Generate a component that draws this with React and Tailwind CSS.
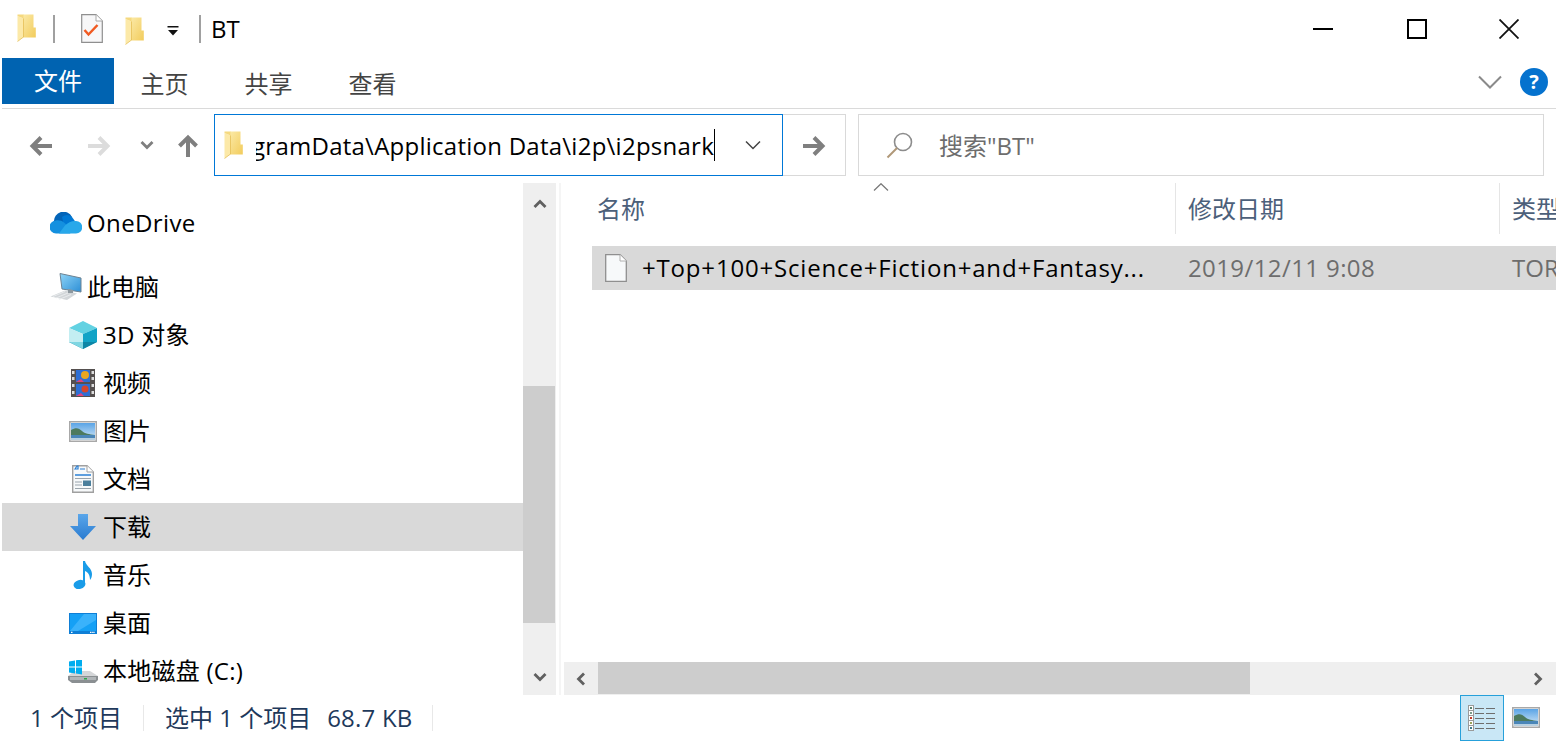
import React from "react";

const FONT = "[font-family:'Open_Sans','Noto_Sans_CJK_SC',sans-serif]";

function Folder({ id, className }) {
  return (
    <svg className={className} width="20" height="28" viewBox="0 0 20 28">
      <defs>
        <linearGradient id={id} x1="0" y1="0" x2="1" y2="1">
          <stop offset="0" stopColor="#fbe9a6" />
          <stop offset="1" stopColor="#f2cc5c" />
        </linearGradient>
      </defs>
      <path d="M6 0.500H16.500V13.500H18.800V23.500H6z" fill={`url(#${id})`} />
      <path d="M0.500 2L6.500 4.500V23L0.500 27.500z" fill="#fce9a8" />
      <path d="M0.500 0.500H6.500V4.500L0.500 2z" fill="#f5d97f" />
      <path d="M6.500 4.500V23L0.500 27.500" fill="none" stroke="#e2b94c" strokeWidth="0.700" />
    </svg>
  );
}

function Chevron({ dir, className }) {
  const r = { up: 0, right: 90, down: 180, left: 270 }[dir];
  return (
    <svg className={className} width="14" height="10" viewBox="0 0 14 10" style={{ transform: `rotate(${r}deg)` }}>
      <path d="M1.500 8L7 2.500L12.500 8" fill="none" stroke="#606060" strokeWidth="2.800" />
    </svg>
  );
}

function Arrow({ color, rotate = 0 }) {
  return (
    <svg width="24" height="22" viewBox="0 0 24 22" style={{ transform: `rotate(${rotate}deg)` }}>
      <path d="M23 11H4M12 2.500L3.500 11L12 19.500" fill="none" stroke={color} strokeWidth="4" />
    </svg>
  );
}

const OneDriveIcon = () => (
  <svg width="32" height="22" viewBox="0 0 32 22">
    <path d="M4 10a9.500 9.500 0 0 1 18-5l-7 13H6z" fill="#0364b8" />
    <path d="M12 5a8 8 0 0 1 10 0l5 7-12 6z" fill="#0078d4" />
    <path d="M6 8.500c3-.5 6 .5 8 2l9 8-3 3H6a6.500 6.500 0 0 1 0-13z" fill="#1490df" />
    <path d="M26 9a6 6 0 0 1 0 12.500H9l6-8c3-3 7-5 11-4.500z" fill="#28a8ea" />
  </svg>
);
const PcIcon = () => (
  <svg width="32" height="28" viewBox="0 0 32 28">
    <defs>
      <linearGradient id="pcs" x1="0" y1="0" x2="1" y2="1">
        <stop offset="0" stopColor="#8fd4f7" />
        <stop offset="1" stopColor="#2d8fd6" />
      </linearGradient>
    </defs>
    <path d="M10 0.500L31 5v14l-19-3z" fill="url(#pcs)" stroke="#6d8292" strokeWidth="1" />
    <path d="M0.500 23.500L15 17.500l12 3-10 6.500z" fill="#d2d6d9" />
    <path d="M3 23.500l12-5M6 25l12-5M9 26.500l12-5" stroke="#eef0f1" strokeWidth="0.800" />
    <path d="M18 16l5 1v3h-5z" fill="#8d989f" />
  </svg>
);
const CubeIcon = () => (
  <svg width="28" height="28" viewBox="0 0 28 28">
    <path d="M14 0L28 7 14 13 0 7z" fill="#63d2e2" />
    <path d="M0 7l14 6v15L0 21z" fill="#c3eef2" />
    <path d="M28 7L14 13v15l14-7z" fill="#11a3c6" />
    <path d="M14 21l14 0-14 7-14-7z" fill="#0c7e9e" opacity="0.8" />
    <path d="M0 21l14 7v-7z" fill="#7fd6e2" />
  </svg>
);
const VideoIcon = () => (
  <svg width="24" height="28" viewBox="0 0 24 28">
    <rect width="24" height="28" fill="#55504f" />
    <rect x="5" y="1" width="14" height="12" fill="#2e6fd4" />
    <rect x="5" y="15" width="14" height="12" fill="#2e6fd4" />
    <circle cx="14" cy="6" r="4" fill="#e9a620" />
    <circle cx="14" cy="20" r="3.500" fill="#d6452c" />
    <path d="M5 13l5-3 3 3zM5 27l5-3 3 3z" fill="#e2437c" />
    <g fill="#dddddd">
      <rect x="1" y="2" width="2.500" height="3" /><rect x="1" y="8" width="2.500" height="3" /><rect x="1" y="15" width="2.500" height="3" /><rect x="1" y="22" width="2.500" height="3" />
      <rect x="20.500" y="2" width="2.500" height="3" /><rect x="20.500" y="8" width="2.500" height="3" /><rect x="20.500" y="15" width="2.500" height="3" /><rect x="20.500" y="22" width="2.500" height="3" />
    </g>
  </svg>
);
function PicIcon({ id, w = 28, h = 21 }) {
  return (
    <svg width={w} height={h} viewBox="0 0 28 21">
      <defs>
        <linearGradient id={id} x1="0" y1="0" x2="0" y2="1">
          <stop offset="0" stopColor="#5aa4e6" />
          <stop offset="1" stopColor="#d6e9f7" />
        </linearGradient>
      </defs>
      <rect x="0.750" y="0.750" width="26.500" height="19.500" fill="#fff" stroke="#a8a8a8" strokeWidth="1.500" />
      <rect x="2" y="2" width="24" height="17" fill={`url(#${id})`} />
      <path d="M2 9c5-3 8-2 11 1s7 3 13 4v1H2z" fill="#4d7a5e" />
      <path d="M2 14h24v5H2z" fill="#4a86b8" />
      <path d="M2 17h24v2H2z" fill="#b8d0e0" />
    </svg>
  );
}
const DocIcon = () => (
  <svg width="22" height="28" viewBox="0 0 22 28">
    <path d="M0.700 0.700H15L21.300 7V27.300H0.700z" fill="#f7f9fa" stroke="#a0a0a0" strokeWidth="1.400" />
    <path d="M15 0.700V7H21.300" fill="#fff" stroke="#a0a0a0" strokeWidth="1" />
    <path d="M3 4l2-3h1v3zM8 4h5" stroke="#2a7fd4" strokeWidth="1.200" fill="none" />
    <path d="M3 10h16" stroke="#2a7fd4" strokeWidth="1.500" />
    <path d="M3 13.500h16M3 17h7M3 20h7M3 23.500h16" stroke="#9aa4ac" strokeWidth="1.200" />
    <rect x="11" y="15.500" width="8" height="5.500" fill="#4b7f9c" />
  </svg>
);
const DownIcon = () => (
  <svg width="26" height="26" viewBox="0 0 26 26">
    <defs>
      <linearGradient id="dl" x1="0" y1="0" x2="0" y2="1">
        <stop offset="0" stopColor="#5aa6ea" />
        <stop offset="1" stopColor="#2a7bd0" />
      </linearGradient>
    </defs>
    <path d="M8 0h10v12h8L13 26 0 12h8z" fill="url(#dl)" />
  </svg>
);
const MusicIcon = () => (
  <svg width="20" height="28" viewBox="0 0 20 28">
    <ellipse cx="6.500" cy="23.500" rx="6" ry="4.500" fill="#1a9ce8" transform="rotate(-15 6.500 23.500)" />
    <path d="M10 23V0h2c1 5 7 7 7 13 0 3-1 5-2 6 0-5-2-8-5-9v13z" fill="#1a9ce8" />
  </svg>
);
const DesktopIcon = () => (
  <svg width="28" height="21" viewBox="0 0 28 21">
    <rect width="28" height="21" fill="#0f7fd6" />
    <rect x="1" y="1" width="26" height="17" fill="#15a0f5" />
    <path d="M1 18L15 1h12v6L9 18z" fill="#3ab2fb" />
    <path d="M2 19.300h1.500M21 19.300h5" stroke="#fff" strokeWidth="1.200" strokeDasharray="1.500 .7" />
  </svg>
);
const DriveIcon = () => (
  <svg width="30" height="23" viewBox="0 0 30 23">
    <path d="M6 11h16l8 5v3H0v-3z" fill="#d4d6d8" />
    <path d="M0 16h30v4l-3 3H4l-4-3z" fill="#8a8f92" />
    <path d="M2 17h26v3H2z" fill="#b0b5b8" />
    <rect x="16" y="18" width="3" height="1.500" fill="#2ca84a" />
    <g fill="#00adef">
      <path d="M1 1.500l6-1v6H1z" /><path d="M8 0.300l6-1V6.500H8z" /><path d="M1 7.500h6v6l-6-1z" /><path d="M8 7.500h6v7l-6-1z" />
    </g>
  </svg>
);

const NAV = [
  { label: "此电脑", icon: <PcIcon />, level: 1 },
  { label: "3D 对象", icon: <CubeIcon />, level: 2, tracking: "tracking-[0.3px]" },
  { label: "视频", icon: <VideoIcon />, level: 2 },
  { label: "图片", icon: <PicIcon id="navpic" />, level: 2 },
  { label: "文档", icon: <DocIcon />, level: 2 },
  { label: "下载", icon: <DownIcon />, level: 2, active: true },
  { label: "音乐", icon: <MusicIcon />, level: 2 },
  { label: "桌面", icon: <DesktopIcon />, level: 2 },
  { label: "本地磁盘 (C:)", icon: <DriveIcon />, level: 2, tracking: "tracking-[0.25px]" },
];

function NavRow({ item }) {
  return (
    <div className={`flex h-12 shrink-0 items-center ${item.level === 1 ? "pl-[48px]" : "pl-[66px]"} ${item.active ? "bg-[#d9d9d9]" : ""}`}>
      <span className={`flex items-center justify-center ${item.level === 1 ? "w-[32px] mr-[5px]" : "w-[30px] mr-[5px]"}`}>{item.icon}</span>
      <span className={`text-black whitespace-nowrap ${item.tracking || ""}`}>{item.label}</span>
    </div>
  );
}

export default function App() {
  return (
    <div className={`${FONT} flex h-[743px] w-[1558px] flex-col overflow-hidden bg-white px-[2px] text-[24px] leading-[32px]`}>
      {/* Title bar */}
      <div className="flex h-[57px] shrink-0 items-center">
        <Folder id="f1" className="ml-[15px] mb-[2px]" />
        <div className="ml-[16px] h-[28px] w-[2px] bg-[#a0a0a0]" />
        <svg className="ml-[26px]" width="22" height="29" viewBox="0 0 22 29">
          <path d="M0.700 0.700H15L21.300 7V28.300H0.700z" fill="#f7f7f8" stroke="#8f8f8f" strokeWidth="1.200" />
          <path d="M15 0.700V7H21.300" fill="#fff" stroke="#a8a8a8" strokeWidth="1" />
          <path d="M3.500 16l4 4.500 9-9.500" fill="none" stroke="#f05a22" strokeWidth="2.500" />
        </svg>
        <Folder id="f2" className="ml-[22px] mt-[4px]" />
        <svg className="ml-[22px] mt-[4px]" width="12" height="10" viewBox="0 0 12 10">
          <rect x="0.500" width="11" height="1.500" fill="#111" />
          <path d="M1 4h10L6 9.500z" fill="#111" />
        </svg>
        <div className="ml-[20px] h-[28px] w-[2px] bg-[#a0a0a0]" />
        <span className="ml-[10px] text-black">BT</span>
        <div className="ml-auto flex items-center pt-[1px]">
          <span className="flex w-[94px] justify-center"><span className="block h-[2px] w-[20px] bg-black" /></span>
          <span className="flex w-[93px] justify-center"><span className="block h-[20px] w-[20px] border-2 border-black" /></span>
          <span className="flex w-[92px] justify-center pr-[1px]">
            <svg width="20" height="20" viewBox="0 0 20 20"><path d="M0.500 0.500L19.500 19.500M19.500 0.500L0.500 19.500" stroke="#111" strokeWidth="1.800" /></svg>
          </span>
          <span className="w-[1px]" />
        </div>
      </div>

      {/* Ribbon tabs */}
      <div className="flex h-[52px] shrink-0 items-start border-b border-[#dadada] pt-[1px]">
        <div className="flex h-[46px] w-[112px] items-center justify-center bg-[#0063b1] text-white">文件</div>
        {["主页", "共享", "查看"].map((t) => (
          <div key={t} className="flex h-[52px] w-[104px] items-center justify-center pr-[3px] text-[#444444]">{t}</div>
        ))}
        <div className="ml-auto flex h-[48px] items-center">
          <svg width="24" height="14" viewBox="0 0 24 14"><path d="M1 1.500L12 12.500L23 1.500" fill="none" stroke="#8a8a8a" strokeWidth="2" /></svg>
          <span className="ml-[18px] mr-[8px] flex h-[28px] w-[28px] items-center justify-center rounded-full bg-[#0572ce] text-[20px] font-bold text-white">?</span>
        </div>
      </div>

      {/* Address bar */}
      <div className="mt-[5px] flex h-[62px] shrink-0 items-center">
        <span className="ml-[27px] mt-[2px] flex w-[24px]"><Arrow color="#7f7f7f" /></span>
        <span className="ml-[34px] mt-[2px] flex w-[24px]"><Arrow color="#dcdcdc" rotate={180} /></span>
        <svg className="ml-[29px]" width="14" height="10" viewBox="0 0 14 10"><path d="M1.500 2L7 7.500L12.500 2" fill="none" stroke="#7f7f7f" strokeWidth="2.800" /></svg>
        <span className="ml-[22px] mt-[2px] flex w-[24px]"><Arrow color="#7f7f7f" rotate={90} /></span>
        <div className="ml-[14px] flex h-[62px] w-[569px] items-center border border-[#0078d7] pl-[9px]">
          <Folder id="f3" />
          <div className="ml-[12px] mt-[2px] flex w-[458px] justify-end overflow-hidden whitespace-nowrap text-black">
            <span className="shrink-0 tracking-[0.25px]">C:\ProgramData\Application Data\i2p\i2psnark</span>
          </div>
          <span className="h-[32px] w-[1px] shrink-0 bg-black" />
          <svg className="ml-[30px]" width="16" height="10" viewBox="0 0 16 10"><path d="M1 1.500L8 8.500L15 1.500" fill="none" stroke="#444" strokeWidth="1.500" /></svg>
        </div>
        <div className="flex h-[62px] w-[63px] items-center justify-center border border-l-0 border-[#d9d9d9] pt-[1px]">
          <Arrow color="#7f7f7f" rotate={180} />
        </div>
        <div className="ml-[12px] flex h-[62px] w-[686px] items-center border border-[#d9d9d9] pl-[27px] text-[#6d6d6d]">
          <svg width="28" height="28" viewBox="0 0 28 28">
            <circle cx="17" cy="11" r="8.500" fill="none" stroke="#8c8c8c" strokeWidth="1.600" />
            <path d="M11 17L1.500 26.500" stroke="#b09878" strokeWidth="2" />
          </svg>
          <span className="ml-[25px] mt-[2px]">搜索"BT"</span>
        </div>
      </div>

      {/* Main */}
      <div className="mt-[7px] flex min-h-0 flex-1">
        <div className="flex w-[521px] shrink-0 flex-col overflow-hidden pt-[16px]">
          <div className="flex h-12 shrink-0 items-center pl-[48px]">
            <span className="mr-[5px] flex w-[32px] justify-center"><OneDriveIcon /></span>
            <span className="text-black tracking-[0.38px]">OneDrive</span>
          </div>
          <div className="h-[16px] shrink-0" />
          {NAV.map((item) => <NavRow key={item.label} item={item} />)}
        </div>

        <div className="flex w-[33px] shrink-0 flex-col bg-[#efefef]">
          <div className="flex h-[203px] justify-center pt-[16px]"><Chevron dir="up" /></div>
          <div className="h-[237px] w-[32px] bg-[#cdcdcd]" />
          <div className="flex flex-1 items-end justify-center pb-[13px]"><Chevron dir="down" /></div>
        </div>

        <div className="ml-[3px] w-[2px] shrink-0 bg-[#f5f5f5]" />

        <div className="relative ml-[3px] flex min-w-0 flex-1 flex-col">
          <svg className="absolute left-[309px] top-0" width="16" height="8" viewBox="0 0 16 8"><path d="M1 7.500L8 0.700L15 7.500" fill="none" stroke="#777" strokeWidth="1.200" /></svg>
          <div className="flex h-[51px] shrink-0 text-[#4c607a]">
            <div className="flex w-[612px] shrink-0 items-center border-r border-[#e5e5e5] pl-[33px]">名称</div>
            <div className="flex w-[324px] shrink-0 items-center border-r border-[#e5e5e5] pl-[12px]">修改日期</div>
            <div className="flex flex-1 items-center overflow-hidden whitespace-nowrap pl-[12px]">类型</div>
          </div>
          <div className="min-h-0 flex-1 pl-[28px] pt-[12px]">
            <div className="flex h-[44px] items-center overflow-hidden whitespace-nowrap bg-[#d9d9d9]">
              <div className="flex w-[596px] shrink-0 items-center pl-[13px]">
                <svg width="22" height="28" viewBox="0 0 22 28">
                  <path d="M0.700 0.700H15L21.300 7V27.300H0.700z" fill="#f7f9fa" stroke="#8f8f8f" strokeWidth="1.300" />
                  <path d="M15 0.700V7H21.300" fill="#fff" stroke="#b0b0b0" strokeWidth="1" />
                </svg>
                <span className="ml-[15px] text-black tracking-[0.82px]">+Top+100+Science+Fiction+and+Fantasy...</span>
              </div>
              <div className="w-[324px] shrink-0 text-[#6d6d6d] tracking-[0.4px]">2019/12/11 9:08</div>
              <div className="text-[#6d6d6d]">TORRENT 文件</div>
            </div>
          </div>
          <div className="flex h-[33px] shrink-0 bg-[#efefef]">
            <div className="flex w-[34px] items-center justify-center"><Chevron dir="left" /></div>
            <div className="h-[32px] w-[652px] bg-[#cdcdcd]" />
            <div className="flex flex-1 items-center justify-end pr-[11px]"><Chevron dir="right" /></div>
          </div>
        </div>
      </div>

      {/* Status bar */}
      <div className="flex h-[48px] shrink-0 items-start text-[#1e395b]">
        <span className="ml-[28px] mt-[7px]">1 个项目</span>
        <span className="ml-[21px] mt-[10px] h-[26px] w-[1px] bg-[#e8e8e8]" />
        <span className="ml-[21px] mt-[7px] whitespace-pre">选中 1 个项目</span>
        <span className="ml-[16px] mt-[7px] whitespace-pre tracking-[0.2px]">68.7 KB</span>
        <span className="ml-[20px] mt-[10px] h-[26px] w-[1px] bg-[#e8e8e8]" />
        <div className="ml-auto flex items-start">
          <div className="flex h-[46px] w-[44px] flex-col items-center justify-center gap-[1px] border border-[#26a0da] bg-[#c9e7f6]">
            {["#55806f", "#7a9a8a", "#c43a2a", "#9aa35a", "#3f7a8a"].map((c, i) => (
              <div key={i} className="flex items-center">
                <span className="flex h-[4px] w-[4px] items-center justify-center bg-white outline-1 outline-[#9a9a9a]">
                  <span className="block h-[2px] w-[2px]" style={{ backgroundColor: c }} />
                </span>
                <span className="ml-[2px] block h-[1px] w-[9px] bg-[#6e6e6e]" />
                <span className="ml-[2px] block h-[1px] w-[9px] bg-[#6e6e6e]" />
              </div>
            ))}
          </div>
          <span className="ml-[8px] mr-[16px] mt-[12px] flex"><PicIcon id="viewpic" /></span>
        </div>
      </div>
    </div>
  );
}
